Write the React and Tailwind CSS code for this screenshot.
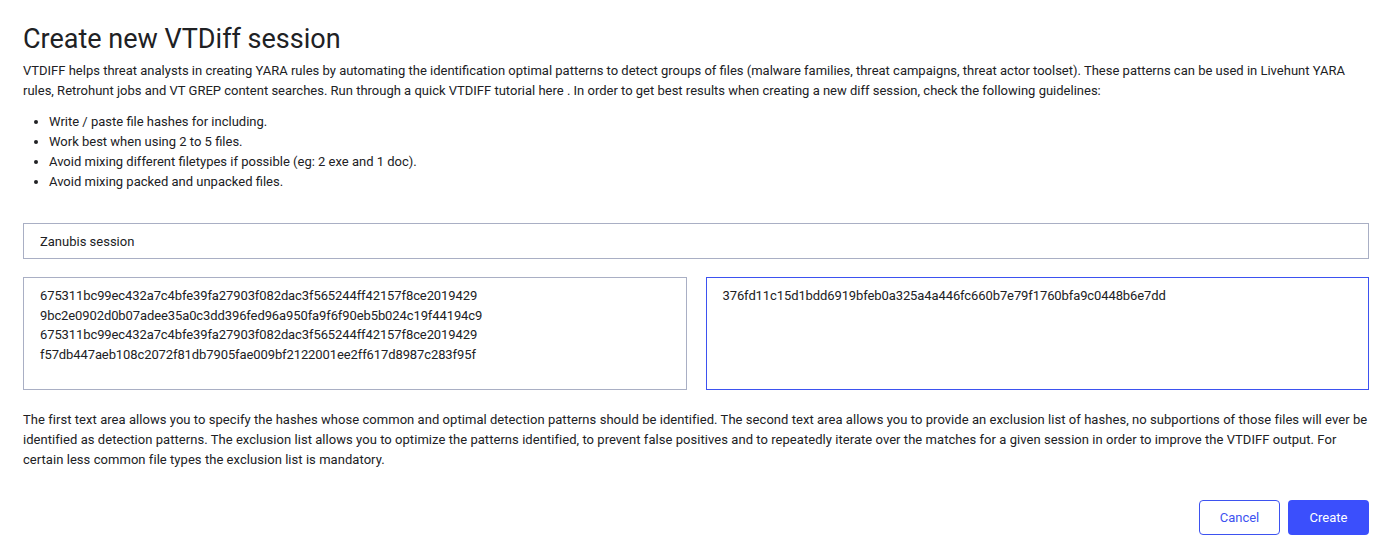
import { useState } from 'react';

const INCLUDE = [
  '675311bc99ec432a7c4bfe39fa27903f082dac3f565244ff42157f8ce2019429',
  '9bc2e0902d0b07adee35a0c3dd396fed96a950fa9f6f90eb5b024c19f44194c9',
  '675311bc99ec432a7c4bfe39fa27903f082dac3f565244ff42157f8ce2019429',
  'f57db447aeb108c2072f81db7905fae009bf2122001ee2ff617d8987c283f95f',
].join('\n');

const GUIDELINES = [
  'Write / paste file hashes for including.',
  'Work best when using 2 to 5 files.',
  'Avoid mixing different filetypes if possible (eg: 2 exe and 1 doc).',
  'Avoid mixing packed and unpacked files.',
];

export default function App() {
  const [name, setName] = useState('Zanubis session');
  const [include, setInclude] = useState(INCLUDE);
  const [exclude, setExclude] = useState('376fd11c15d1bdd6919bfeb0a325a4a446fc660b7e79f1760bfa9c0448b6e7dd');

  return (
    <div className="bg-white text-[#202124] px-[23px] pt-[22px] pb-[23px] font-['Roboto',sans-serif]">
      {/* Header */}
      <h1 className="text-[27px] leading-[34px] font-normal mb-[5px]">Create new VTDiff session</h1>
      <p className="text-[13px] leading-[20px]">
        VTDIFF helps threat analysts in creating YARA rules by automating the identification optimal patterns to detect groups of files (malware families, threat campaigns, threat actor toolset). These patterns can be used in Livehunt YARA rules, Retrohunt jobs and VT GREP content searches. Run through a quick VTDIFF tutorial here . In order to get best results when creating a new diff session, check the following guidelines:
      </p>
      <ul className="list-disc pl-[26px] mt-[11px] text-[13px] leading-[20px]">
        {GUIDELINES.map((g) => (
          <li key={g}>{g}</li>
        ))}
      </ul>

      {/* Form */}
      <input
        value={name}
        onChange={(e) => setName(e.target.value)}
        className="mt-[31px] block w-full h-[36px] border border-[#a9afc4] px-[16px] text-[13px] outline-none"
      />
      <div className="flex gap-[19px] mt-[18px]">
        <textarea
          value={include}
          onChange={(e) => setInclude(e.target.value)}
          className="flex-1 h-[113px] border border-[#a9afc4] px-[16px] py-[8px] text-[13px] leading-[19.5px] tracking-[-0.1px] resize-none outline-none"
        />
        <textarea
          value={exclude}
          onChange={(e) => setExclude(e.target.value)}
          className="flex-1 h-[113px] border border-[#3d52f0] px-[16px] py-[8px] text-[13px] leading-[19.5px] tracking-[-0.1px] resize-none outline-none"
        />
      </div>
      <p className="mt-[20px] text-[13px] leading-[20px] tracking-[0.05px]">
        The first text area allows you to specify the hashes whose common and optimal detection patterns should be identified. The second text area allows you to provide an exclusion list of hashes, no subportions of those files will ever be identified as detection patterns. The exclusion list allows you to optimize the patterns identified, to prevent false positives and to repeatedly iterate over the matches for a given session in order to improve the VTDIFF output. For certain less common file types the exclusion list is mandatory.
      </p>

      {/* Actions */}
      <div className="flex justify-end gap-[8px] mt-[30px]">
        <button className="w-[81px] h-[35px] rounded-[4px] border border-[#3d52f0] text-[#3d52f0] text-[13px] bg-white">Cancel</button>
        <button className="w-[81px] h-[35px] rounded-[4px] bg-[#3b4ffc] text-white text-[13px]">Create</button>
      </div>
    </div>
  );
}
